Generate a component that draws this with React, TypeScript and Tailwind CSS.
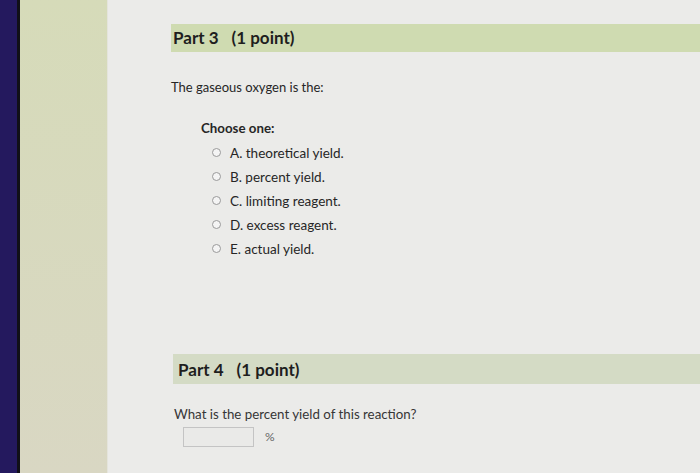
export default function App() {
  const options = [
    'A. theoretical yield.',
    'B. percent yield.',
    'C. limiting reagent.',
    'D. excess reagent.',
    'E. actual yield.',
  ];

  return (
    <div
      className="flex h-[473px] w-[700px] overflow-hidden bg-[#ebebe9] text-[#262626]"
      style={{ fontFamily: 'Lato, "Open Sans", sans-serif' }}
    >
      {/* screen edge */}
      <div className="w-[17px] shrink-0 bg-[#24195e]" />
      <div className="w-[3px] shrink-0 bg-[#111018]" />
      {/* side panel */}
      <div className="w-[87px] shrink-0 bg-gradient-to-b from-[#d6dbb9] to-[#d9d7c3]" />
      <div className="w-px shrink-0 bg-[#e4e4dc]" />

      <div className="flex-1 pl-[63px] pt-[24px]">
        <div className="flex h-[28px] items-center bg-[#cfdbb1] pl-[2px] text-[17px] font-bold text-[#1e1e1e]">
          <span>Part 3</span>
          <span className="ml-[13px]">(1 point)</span>
        </div>

        <p className="mt-[26px] text-[13px]">The gaseous oxygen is the:</p>

        <div className="mt-[21px] pl-[30px]">
          <p className="text-[13.3px] font-bold">Choose one:</p>
          <ul className="mt-[5px] flex flex-col gap-[5px] pl-[11px]">
            {options.map((o) => (
              <li key={o} className="flex h-[19px] items-center text-[13.5px]">
                <span className="h-[9px] w-[9px] rounded-full border border-[#9a9a9a] bg-[#f4f4f4]" />
                <span className="ml-[9px]">{o}</span>
              </li>
            ))}
          </ul>
        </div>

        <div className="ml-[2px] mt-[96px] flex h-[30px] items-center bg-[#d4dbc5] pl-[5px] text-[17px] font-bold text-[#1e1e1e]">
          <span>Part 4</span>
          <span className="ml-[13px]">(1 point)</span>
        </div>

        <p className="mt-[21px] pl-[3px] text-[13.3px] text-[#363636]">What is the percent yield of this reaction?</p>
        <div className="mt-[2px] flex items-center pl-[12px]">
          <div className="h-[20px] w-[71px] border border-[#c4c4c4] bg-[#eaeae8]" />
          <span className="ml-[11px] text-[12px] text-[#666]">%</span>
        </div>
      </div>
    </div>
  );
}
